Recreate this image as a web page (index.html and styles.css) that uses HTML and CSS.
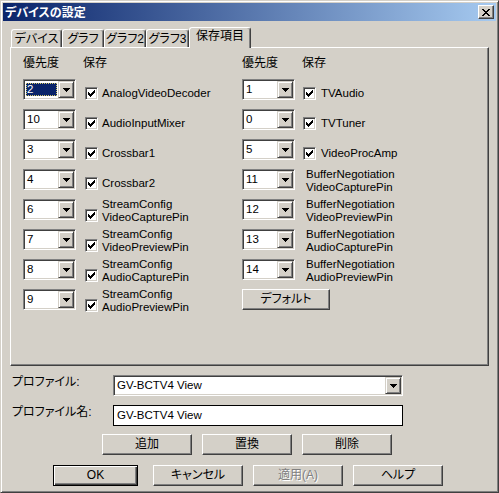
FILE: index.html
```html
<!DOCTYPE html>
<html lang="ja">
<head>
<meta charset="utf-8">
<title>デバイスの設定</title>
<link rel="stylesheet" href="styles.css">
</head>
<body>
<div class="window">
  <div class="titlebar">
    <span class="title">デバイスの設定</span>
    <span class="close"><svg width="8" height="7" viewBox="0 0 8 7" shape-rendering="crispEdges"><path d="M0 0h2v1h1v1h2v-1h1v-1h2v1h-1v1h-1v1h-1v1h1v1h1v1h1v1h-2v-1h-1v-1h-2v1h-1v1h-2v-1h1v-1h1v-1h1v-1h-1v-1h-1v-1h-1z" fill="#000"/></svg></span>
  </div>
  <div class="body">
    <div class="tabs">
      <div class="tab t1">デバイス</div>
      <div class="tab t2">グラフ</div>
      <div class="tab t3">グラフ2</div>
      <div class="tab t4">グラフ3</div>
      <div class="tab active">保存項目</div>
    </div>
    <div class="panel">
      <div class="col">
        <div class="head"><span class="h1">優先度</span><span>保存</span></div>
        <div class="row"><div class="combo"><div class="val sel"><span>2</span></div><div class="dd"><svg width="7" height="4" viewBox="0 0 7 4" shape-rendering="crispEdges"><path d="M0 0h7v1h-1v1h-1v1h-1v1h-1v-1h-1v-1h-1v-1h-1z"/></svg></div></div>
          <div class="chk"><span class="cb"><svg width="7" height="7" viewBox="0 0 7 7" shape-rendering="crispEdges"><path d="M6 0h1v3h-1v1h-1v1h-1v1h-1v1h-1v-1h-1v-1h-1v-3h1v1h1v1h1v-1h1v-1h1z"/></svg></span><span class="lbl">AnalogVideoDecoder</span></div></div>
        <div class="row"><div class="combo"><div class="val">10</div><div class="dd"><svg width="7" height="4" viewBox="0 0 7 4" shape-rendering="crispEdges"><path d="M0 0h7v1h-1v1h-1v1h-1v1h-1v-1h-1v-1h-1v-1h-1z"/></svg></div></div>
          <div class="chk"><span class="cb"><svg width="7" height="7" viewBox="0 0 7 7" shape-rendering="crispEdges"><path d="M6 0h1v3h-1v1h-1v1h-1v1h-1v1h-1v-1h-1v-1h-1v-3h1v1h1v1h1v-1h1v-1h1z"/></svg></span><span class="lbl">AudioInputMixer</span></div></div>
        <div class="row"><div class="combo"><div class="val">3</div><div class="dd"><svg width="7" height="4" viewBox="0 0 7 4" shape-rendering="crispEdges"><path d="M0 0h7v1h-1v1h-1v1h-1v1h-1v-1h-1v-1h-1v-1h-1z"/></svg></div></div>
          <div class="chk"><span class="cb"><svg width="7" height="7" viewBox="0 0 7 7" shape-rendering="crispEdges"><path d="M6 0h1v3h-1v1h-1v1h-1v1h-1v1h-1v-1h-1v-1h-1v-3h1v1h1v1h1v-1h1v-1h1z"/></svg></span><span class="lbl">Crossbar1</span></div></div>
        <div class="row"><div class="combo"><div class="val">4</div><div class="dd"><svg width="7" height="4" viewBox="0 0 7 4" shape-rendering="crispEdges"><path d="M0 0h7v1h-1v1h-1v1h-1v1h-1v-1h-1v-1h-1v-1h-1z"/></svg></div></div>
          <div class="chk"><span class="cb"><svg width="7" height="7" viewBox="0 0 7 7" shape-rendering="crispEdges"><path d="M6 0h1v3h-1v1h-1v1h-1v1h-1v1h-1v-1h-1v-1h-1v-3h1v1h1v1h1v-1h1v-1h1z"/></svg></span><span class="lbl">Crossbar2</span></div></div>
        <div class="row"><div class="combo"><div class="val">6</div><div class="dd"><svg width="7" height="4" viewBox="0 0 7 4" shape-rendering="crispEdges"><path d="M0 0h7v1h-1v1h-1v1h-1v1h-1v-1h-1v-1h-1v-1h-1z"/></svg></div></div>
          <div class="chk two"><span class="cb"><svg width="7" height="7" viewBox="0 0 7 7" shape-rendering="crispEdges"><path d="M6 0h1v3h-1v1h-1v1h-1v1h-1v1h-1v-1h-1v-1h-1v-3h1v1h1v1h1v-1h1v-1h1z"/></svg></span><span class="lbl">StreamConfig<br>VideoCapturePin</span></div></div>
        <div class="row"><div class="combo"><div class="val">7</div><div class="dd"><svg width="7" height="4" viewBox="0 0 7 4" shape-rendering="crispEdges"><path d="M0 0h7v1h-1v1h-1v1h-1v1h-1v-1h-1v-1h-1v-1h-1z"/></svg></div></div>
          <div class="chk two"><span class="cb"><svg width="7" height="7" viewBox="0 0 7 7" shape-rendering="crispEdges"><path d="M6 0h1v3h-1v1h-1v1h-1v1h-1v1h-1v-1h-1v-1h-1v-3h1v1h1v1h1v-1h1v-1h1z"/></svg></span><span class="lbl">StreamConfig<br>VideoPreviewPin</span></div></div>
        <div class="row"><div class="combo"><div class="val">8</div><div class="dd"><svg width="7" height="4" viewBox="0 0 7 4" shape-rendering="crispEdges"><path d="M0 0h7v1h-1v1h-1v1h-1v1h-1v-1h-1v-1h-1v-1h-1z"/></svg></div></div>
          <div class="chk two"><span class="cb"><svg width="7" height="7" viewBox="0 0 7 7" shape-rendering="crispEdges"><path d="M6 0h1v3h-1v1h-1v1h-1v1h-1v1h-1v-1h-1v-1h-1v-3h1v1h1v1h1v-1h1v-1h1z"/></svg></span><span class="lbl">StreamConfig<br>AudioCapturePin</span></div></div>
        <div class="row"><div class="combo"><div class="val">9</div><div class="dd"><svg width="7" height="4" viewBox="0 0 7 4" shape-rendering="crispEdges"><path d="M0 0h7v1h-1v1h-1v1h-1v1h-1v-1h-1v-1h-1v-1h-1z"/></svg></div></div>
          <div class="chk two"><span class="cb"><svg width="7" height="7" viewBox="0 0 7 7" shape-rendering="crispEdges"><path d="M6 0h1v3h-1v1h-1v1h-1v1h-1v1h-1v-1h-1v-1h-1v-3h1v1h1v1h1v-1h1v-1h1z"/></svg></span><span class="lbl">StreamConfig<br>AudioPreviewPin</span></div></div>
      </div>
      <div class="col col2">
        <div class="head"><span class="h1">優先度</span><span>保存</span></div>
        <div class="row"><div class="combo"><div class="val">1</div><div class="dd"><svg width="7" height="4" viewBox="0 0 7 4" shape-rendering="crispEdges"><path d="M0 0h7v1h-1v1h-1v1h-1v1h-1v-1h-1v-1h-1v-1h-1z"/></svg></div></div>
          <div class="chk"><span class="cb"><svg width="7" height="7" viewBox="0 0 7 7" shape-rendering="crispEdges"><path d="M6 0h1v3h-1v1h-1v1h-1v1h-1v1h-1v-1h-1v-1h-1v-3h1v1h1v1h1v-1h1v-1h1z"/></svg></span><span class="lbl">TVAudio</span></div></div>
        <div class="row"><div class="combo"><div class="val">0</div><div class="dd"><svg width="7" height="4" viewBox="0 0 7 4" shape-rendering="crispEdges"><path d="M0 0h7v1h-1v1h-1v1h-1v1h-1v-1h-1v-1h-1v-1h-1z"/></svg></div></div>
          <div class="chk"><span class="cb"><svg width="7" height="7" viewBox="0 0 7 7" shape-rendering="crispEdges"><path d="M6 0h1v3h-1v1h-1v1h-1v1h-1v1h-1v-1h-1v-1h-1v-3h1v1h1v1h1v-1h1v-1h1z"/></svg></span><span class="lbl">TVTuner</span></div></div>
        <div class="row"><div class="combo"><div class="val">5</div><div class="dd"><svg width="7" height="4" viewBox="0 0 7 4" shape-rendering="crispEdges"><path d="M0 0h7v1h-1v1h-1v1h-1v1h-1v-1h-1v-1h-1v-1h-1z"/></svg></div></div>
          <div class="chk"><span class="cb"><svg width="7" height="7" viewBox="0 0 7 7" shape-rendering="crispEdges"><path d="M6 0h1v3h-1v1h-1v1h-1v1h-1v1h-1v-1h-1v-1h-1v-3h1v1h1v1h1v-1h1v-1h1z"/></svg></span><span class="lbl">VideoProcAmp</span></div></div>
        <div class="row"><div class="combo"><div class="val">11</div><div class="dd"><svg width="7" height="4" viewBox="0 0 7 4" shape-rendering="crispEdges"><path d="M0 0h7v1h-1v1h-1v1h-1v1h-1v-1h-1v-1h-1v-1h-1z"/></svg></div></div>
          <div class="chk two nocb"><span class="lbl">BufferNegotiation<br>VideoCapturePin</span></div></div>
        <div class="row"><div class="combo"><div class="val">12</div><div class="dd"><svg width="7" height="4" viewBox="0 0 7 4" shape-rendering="crispEdges"><path d="M0 0h7v1h-1v1h-1v1h-1v1h-1v-1h-1v-1h-1v-1h-1z"/></svg></div></div>
          <div class="chk two nocb"><span class="lbl">BufferNegotiation<br>VideoPreviewPin</span></div></div>
        <div class="row"><div class="combo"><div class="val">13</div><div class="dd"><svg width="7" height="4" viewBox="0 0 7 4" shape-rendering="crispEdges"><path d="M0 0h7v1h-1v1h-1v1h-1v1h-1v-1h-1v-1h-1v-1h-1z"/></svg></div></div>
          <div class="chk two nocb"><span class="lbl">BufferNegotiation<br>AudioCapturePin</span></div></div>
        <div class="row"><div class="combo"><div class="val">14</div><div class="dd"><svg width="7" height="4" viewBox="0 0 7 4" shape-rendering="crispEdges"><path d="M0 0h7v1h-1v1h-1v1h-1v1h-1v-1h-1v-1h-1v-1h-1z"/></svg></div></div>
          <div class="chk two nocb"><span class="lbl">BufferNegotiation<br>AudioPreviewPin</span></div></div>
        <div class="row"><div class="btn defbtn">デフォルト</div></div>
      </div>
    </div>
    <div class="field-row fr1">
      <span class="flabel">プロファイル:</span>
      <div class="combo wide"><div class="val">GV-BCTV4 View</div><div class="dd"><svg width="7" height="4" viewBox="0 0 7 4" shape-rendering="crispEdges"><path d="M0 0h7v1h-1v1h-1v1h-1v1h-1v-1h-1v-1h-1v-1h-1z"/></svg></div></div>
    </div>
    <div class="field-row fr2">
      <span class="flabel">プロファイル名:</span>
      <div class="textbox">GV-BCTV4 View</div>
    </div>
    <div class="btn-row br1">
      <div class="btn">追加</div>
      <div class="btn">置換</div>
      <div class="btn">削除</div>
    </div>
    <div class="btn-row br2">
      <div class="btn ok">OK</div>
      <div class="btn">キャンセル</div>
      <div class="btn disabled">適用(A)</div>
      <div class="btn">ヘルプ</div>
    </div>
  </div>
</div>
</body>
</html>
```

FILE: styles.css
```css
* { box-sizing: border-box; }
html, body { margin: 0; padding: 0; }
body {
  width: 499px;
  height: 493px;
  overflow: hidden;
  background: #d4d0c8;
  font-family: "Liberation Sans", "Noto Sans CJK JP", sans-serif;
  font-size: 12px;
  color: #000;
  font-feature-settings: "palt";
}
.window {
  width: 499px;
  height: 493px;
  background: #d4d0c8;
  border: 1px solid;
  border-color: #d4d0c8 #404040 #404040 #d4d0c8;
  box-shadow: inset 1px 1px #fff, inset -1px -1px #808080;
  padding: 2px;
}
.titlebar {
  height: 18px;
  background: linear-gradient(to right, #0a246a, #a6caf0);
  display: flex;
  align-items: center;
  justify-content: space-between;
  padding: 0 2px 0 2px;
}
.title {
  color: #fff;
  font-weight: bold;
  font-family: "Noto Sans CJK JP", sans-serif;
  font-size: 12px;
  line-height: 14px;
}
.close {
  width: 16px;
  height: 14px;
  background: #d4d0c8;
  border: 1px solid;
  border-color: #fff #404040 #404040 #fff;
  box-shadow: inset -1px -1px #808080;
  display: flex;
  align-items: center;
  justify-content: center;
}
.close svg { display: block; }
.body { padding-left: 7px; }

/* tabs */
.tabs {
  display: flex;
  align-items: flex-end;
  height: 20px;
  margin-top: 6px;
  padding-left: 1px;
  position: relative;
  z-index: 1;
}
.tab {
  height: 18px;
  border-top: 1px solid #fff;
  border-left: 1px solid #fff;
  border-right: 1px solid #404040;
  box-shadow: inset -1px 0 #808080;
  border-radius: 3px 3px 0 0;
  text-align: center;
  line-height: 16px;
  padding-top: 1px;
  background: #d4d0c8;
}
.t1 { width: 51px; }
.t2 { width: 42px; }
.t3 { width: 42px; }
.t4 { width: 43px; }
.tab.active {
  width: 62px;
  height: 21px;
  margin-bottom: -1px;
  line-height: 15px;
  padding-top: 1px;
}

/* panel */
.panel {
  width: 479px;
  height: 319px;
  border: 1px solid;
  border-color: #fff #404040 #404040 #fff;
  box-shadow: inset -1px -1px #808080;
  padding: 8px 0 0 12px;
  display: grid;
  grid-template-columns: 219px 1fr;
  align-items: start;
}
.head {
  height: 23px;
  display: flex;
  line-height: 14px;
}
.head .h1 { width: 60px; }
.row {
  height: 30px;
  display: flex;
  align-items: flex-start;
}

/* combo */
.combo {
  width: 53px;
  height: 21px;
  display: flex;
  background: #fff;
  border: 1px solid;
  border-color: #808080 #fff #fff #808080;
  box-shadow: inset 1px 1px #404040, inset -1px -1px #d4d0c8;
  padding: 1px;
  flex: none;
}
.val {
  flex: 1;
  line-height: 17px;
  padding-left: 2px;
  white-space: nowrap;
  overflow: hidden;
  font-size: 11.5px;
}
.val.sel { padding: 2px 1px 2px 1px; }
.val.sel span {
  display: block;
  height: 13px;
  line-height: 12px;
  background: #0a246a;
  color: #fff;
  outline: 1px dotted #d4c86a;
  outline-offset: -1px;
  padding-left: 1px;
}
.dd {
  width: 16px;
  height: 17px;
  flex: none;
  background: #d4d0c8;
  border: 1px solid;
  border-color: #d4d0c8 #404040 #404040 #d4d0c8;
  box-shadow: inset 1px 1px #fff, inset -1px -1px #808080;
  display: flex;
  align-items: center;
  justify-content: center;
}
.dd svg { display: block; }

/* checkbox */
.chk {
  display: flex;
  align-items: center;
  margin-left: 9px;
  margin-top: 8px;
}
.col2 .chk { margin-left: 8px; }
.cb {
  width: 13px;
  height: 13px;
  flex: none;
  background: #fff;
  border: 1px solid;
  border-color: #808080 #fff #fff #808080;
  box-shadow: inset 1px 1px #404040, inset -1px -1px #d4d0c8;
  display: flex;
  align-items: center;
  justify-content: center;
}
.cb svg { display: block; }
.lbl {
  margin-left: 4px;
  line-height: 13px;
  white-space: nowrap;
  font-size: 11.5px;
}
.col2 .lbl { margin-left: 5px; }
.chk.two {
  align-items: flex-start;
  margin-top: -1px;
}
.chk.two .cb { margin-top: 11px; }
.col2 .chk.nocb .lbl { margin-left: 3px; }

/* buttons */
.btn {
  height: 21px;
  width: 90px;
  background: #d4d0c8;
  border: 1px solid;
  border-color: #fff #404040 #404040 #fff;
  box-shadow: inset -1px -1px #808080;
  text-align: center;
  line-height: 18px;
  flex: none;
}
.defbtn { width: 88px; }
.btn.ok {
  width: 85px;
  border: 1px solid #000;
  box-shadow: inset 1px 1px #fff, inset -1px -1px #404040, inset -2px -2px #808080;
}
.btn.disabled {
  color: #808080;
  text-shadow: 1px 1px #fff;
}

/* bottom fields */
.field-row {
  display: flex;
  align-items: flex-start;
}
.fr1 { margin-top: 9px; }
.fr2 { margin-top: 9px; }
.flabel {
  width: 103px;
  padding-left: 2px;
  line-height: 14px;
  flex: none;
}
.combo.wide { width: 290px; }
.combo.wide .val { padding-left: 2px; }
.textbox {
  width: 290px;
  height: 21px;
  background: #fff;
  border: 1px solid #000;
  line-height: 19px;
  padding-left: 3px;
  font-size: 11.5px;
}
.btn-row { display: flex; }
.br1 {
  margin-top: 8px;
  margin-left: 92px;
  gap: 10px;
}
.br2 {
  margin-top: 10px;
  margin-left: 43px;
  gap: 10px;
}
.br2 .ok { margin-right: 5px; }
```
